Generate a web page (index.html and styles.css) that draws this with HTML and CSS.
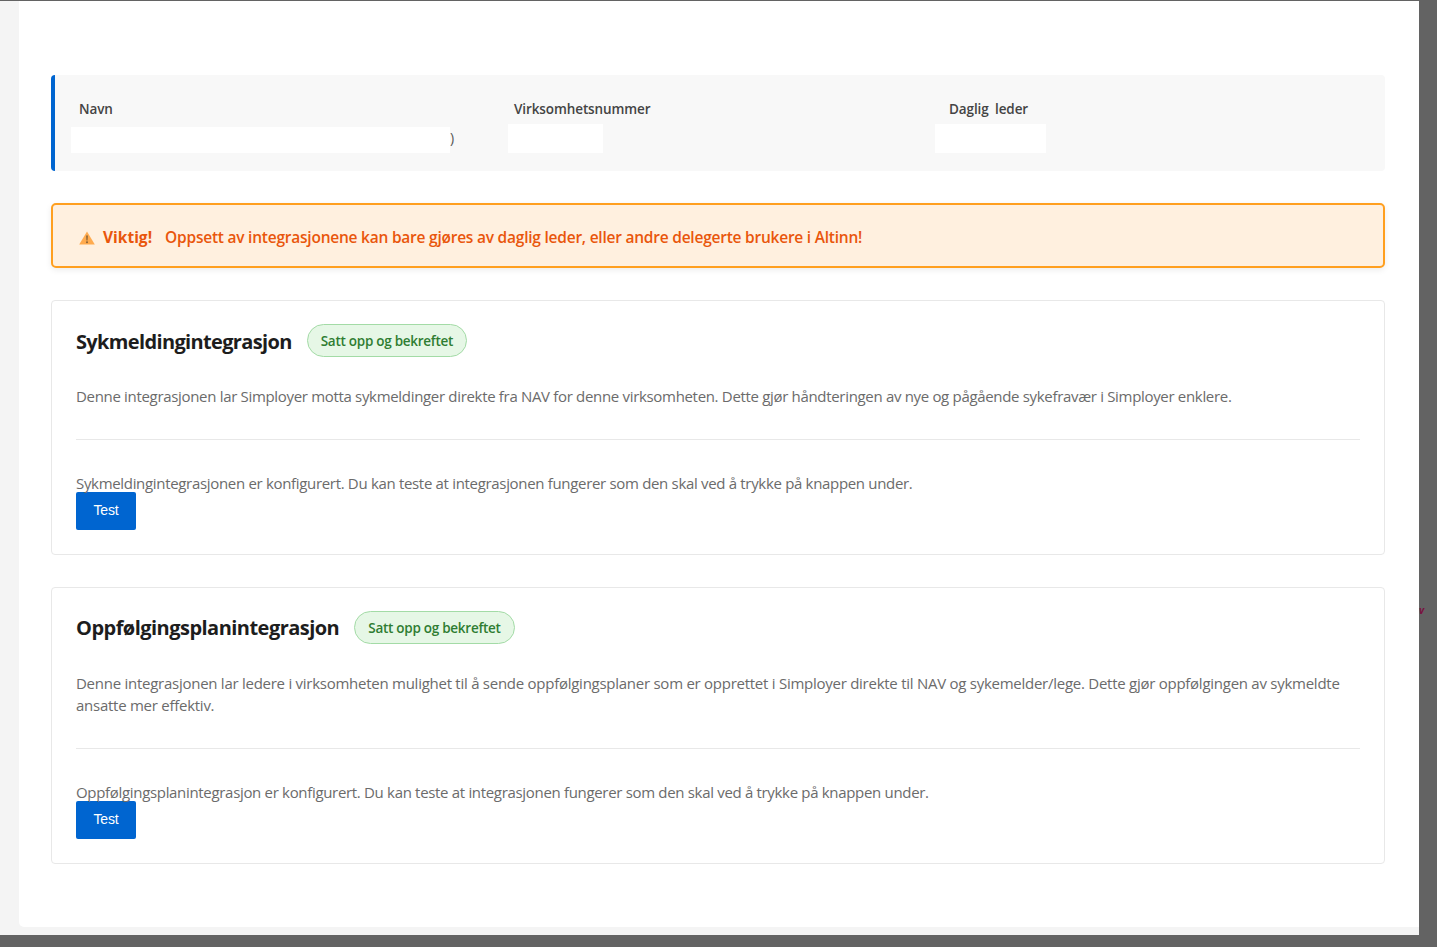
FILE: index.html
```html
<!DOCTYPE html>
<html lang="no">
<head>
<meta charset="utf-8">
<title>Integrasjoner</title>
<link rel="stylesheet" href="styles.css">
</head>
<body>
<div class="frame">
  <div class="sheet">
    <main class="panel">
      <section class="info">
        <div class="info-col col-name">
          <div class="label">Navn</div>
          <div class="value-row"><span class="mask mask-name"></span><span class="paren">)</span></div>
        </div>
        <div class="info-col col-org">
          <div class="label">Virksomhetsnummer</div>
          <div class="value-row"><span class="mask mask-org"></span></div>
        </div>
        <div class="info-col col-lead">
          <div class="label">Daglig leder</div>
          <div class="value-row"><span class="mask mask-lead"></span></div>
        </div>
      </section>

      <section class="alert">
        <svg class="alert-icon" width="16" height="14" viewBox="0 0 16 14" aria-hidden="true">
          <path d="M8 .6 15.8 13.6H.2Z" fill="#ffab4f"/>
          <path d="M7.2 4.6h1.6l-.3 5H7.5Z" fill="#7a5a35"/>
          <rect x="7.2" y="10.4" width="1.6" height="1.7" fill="#7a5a35"/>
        </svg>
        <strong class="alert-title">Viktig!</strong>
        <span class="alert-text">Oppsett av integrasjonene kan bare gjøres av daglig leder, eller andre delegerte brukere i Altinn!</span>
      </section>

      <section class="card">
        <div class="card-head">
          <h2 class="card-title">Sykmeldingintegrasjon</h2>
          <span class="badge">Satt opp og bekreftet</span>
        </div>
        <p class="desc">Denne integrasjonen lar Simployer motta sykmeldinger direkte fra NAV for denne virksomheten. Dette gjør håndteringen av nye og pågående sykefravær i Simployer enklere.</p>
        <hr class="rule">
        <p class="status">Sykmeldingintegrasjonen er konfigurert. Du kan teste at integrasjonen fungerer som den skal ved å trykke på knappen under.</p>
        <button class="btn" type="button">Test</button>
      </section>

      <section class="card">
        <div class="card-head">
          <h2 class="card-title card-title-long">Oppfølgingsplanintegrasjon</h2>
          <span class="badge">Satt opp og bekreftet</span>
        </div>
        <p class="desc desc-long">Denne integrasjonen lar ledere i virksomheten mulighet til å sende oppfølgingsplaner som er opprettet i Simployer direkte til NAV og sykemelder/lege. Dette gjør oppfølgingen av sykmeldte ansatte mer effektiv.</p>
        <hr class="rule">
        <p class="status">Oppfølgingsplanintegrasjon er konfigurert. Du kan teste at integrasjonen fungerer som den skal ved å trykke på knappen under.</p>
        <button class="btn" type="button">Test</button>
      </section>
    </main>
  </div>
  <aside class="side"><span class="side-mark">v</span></aside>
</div>
</body>
</html>
```
FILE: styles.css
```css
* { box-sizing: border-box; }
html, body { height: 100%; }
body {
  margin: 0;
  overflow: hidden;
  background: #636363;
  font-family: "Open Sans", "Noto Sans", "Liberation Sans", sans-serif;
  color: #333;
}
.frame {
  display: flex;
  height: 947px;
  padding-top: 1px;
}
.sheet {
  width: 1419px;
  height: 934px;
  background: #f4f4f4;
  padding: 0 0 8px 19px;
  flex: none;
}
.panel {
  height: 100%;
  background: #fff;
  border-radius: 0 0 0 5px;
  padding: 74px 34.5px 0 32px;
  display: flex;
  flex-direction: column;
}
.side {
  flex: 1;
  padding-top: 603px;
}
.side-mark {
  display: block;
  font-size: 10px;
  line-height: 12px;
  font-style: italic;
  font-weight: 700;
  color: #7a1040;
}

/* Info box */
.info {
  height: 96px;
  flex: none;
  background: #f8f8f8;
  border-left: 4px solid #0065d0;
  border-radius: 4px;
  display: grid;
  grid-template-columns: 435px 435px 1fr;
  padding: 25px 0 0 24px;
}
.label {
  font-size: 13.5px;
  line-height: 18px;
  font-weight: 600;
  letter-spacing: -0.1px;
  word-spacing: 3px;
  color: #444;
}
.value-row {
  height: 35px;
  display: flex;
  align-items: flex-end;
}
.mask { display: block; background: #fff; }
.mask-name { width: 379px; height: 26px; margin-left: -8px; }
.paren { font-size: 14px; line-height: 26px; color: #555; margin: 0 0 2px 0; }
.mask-org { width: 95px; height: 29px; margin-left: -6px; }
.mask-lead { width: 111px; height: 29px; margin-left: -14px; }

/* Alert */
.alert {
  margin-top: 32px;
  height: 65px;
  flex: none;
  background: #fff0df;
  border: 2px solid #ff9f1f;
  border-radius: 5px;
  box-shadow: 0 2px 6px rgba(0, 0, 0, .08);
  display: flex;
  align-items: center;
  padding: 2px 0 0 26px;
  font-size: 15.5px;
  letter-spacing: -0.23px;
  color: #e9560c;
  font-weight: 600;
}
.alert-icon { flex: none; margin-top: 2px; }
.alert-title { margin-left: 8px; font-weight: 700; letter-spacing: 0; }
.alert-text { margin-left: 13px; }

/* Cards */
.card {
  margin-top: 32px;
  flex: none;
  border: 1px solid #e8e8e8;
  border-radius: 4px;
  padding: 23px 24px 24px;
  background: #fff;
}
.card-head {
  display: flex;
  align-items: center;
  height: 33px;
}
.card-title {
  margin: 0;
  font-size: 20px;
  line-height: 33px;
  font-weight: 700;
  letter-spacing: -0.65px;
  color: #1d1d1d;
  position: relative;
  top: 1px;
}
.card-title-long { letter-spacing: -0.53px; top: 0; }
.badge {
  margin-left: 15px;
  height: 33px;
  display: flex;
  align-items: center;
  padding: 0 13px;
  border: 1px solid #a3dba6;
  border-radius: 17px;
  background: #e6f7e6;
  font-size: 13.5px;
  font-weight: 600;
  letter-spacing: -0.27px;
  color: #2f7d32;
}
.desc, .status {
  margin: 0;
  font-size: 15px;
  letter-spacing: -0.32px;
  color: #6b6b6b;
}
.desc { margin-top: 28px; line-height: 22px; }
.desc-long { letter-spacing: -0.26px; }
.rule {
  margin: 32px 0 0;
  border: 0;
  border-top: 1px solid #e8e8e8;
}
.status { margin-top: 34px; line-height: 18px; }
.btn {
  display: block;
  width: 60px;
  height: 38px;
  padding: 0 0 2px;
  border: 0;
  border-radius: 2px;
  background: #0065d0;
  color: #fff;
  font-family: "Liberation Sans", Arial, sans-serif;
  font-size: 14px;
  letter-spacing: -0.2px;
}
```
